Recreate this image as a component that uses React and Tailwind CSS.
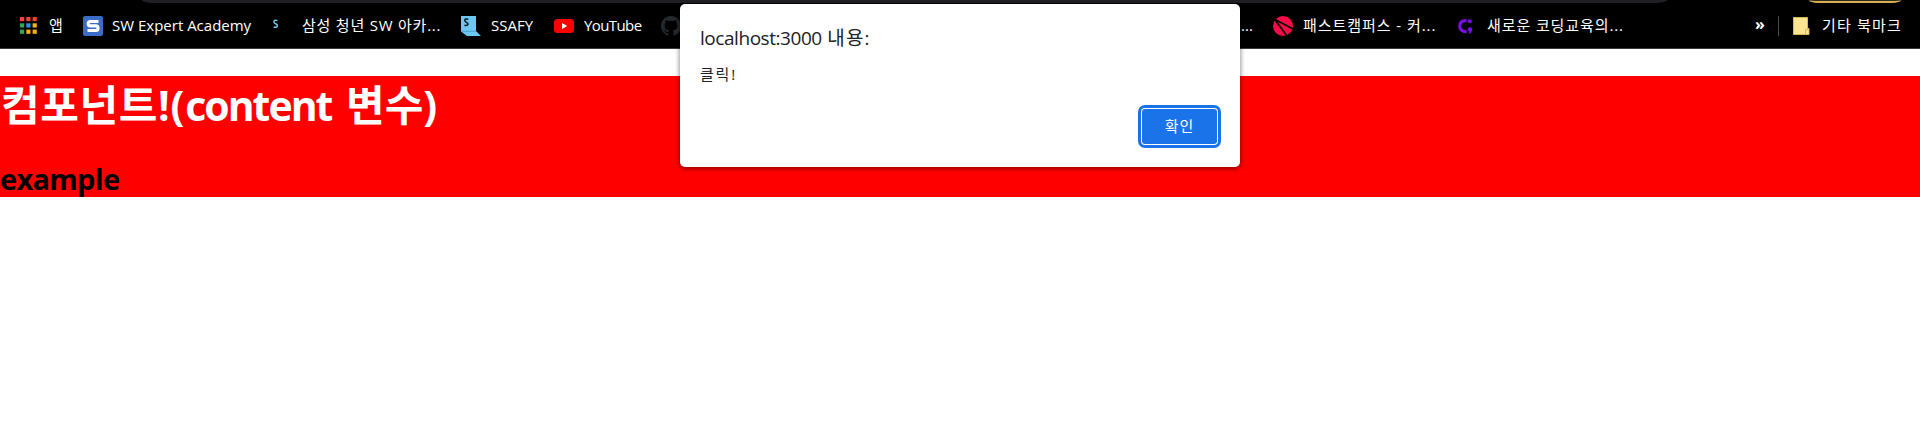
import React from "react";

const latin = "font-['Open_Sans','Noto_Sans_CJK_KR',sans-serif]";

function AppsIcon() {
  const c = ["#f44336", "#f44336", "#f44336", "#34a853", "#2196f3", "#fbb012", "#34a853", "#fbb012", "#fbb012"];
  return (
    <svg className="h-[17px] w-[17px]" viewBox="0 0 17 17">
      {c.map((f, i) => (
        <rect key={i} x={(i % 3) * 6.3} y={Math.floor(i / 3) * 6.3} width="4.2" height="4.2" fill={f} />
      ))}
    </svg>
  );
}

function SwIcon() {
  return (
    <svg className="h-5 w-5" viewBox="0 0 20 20">
      <rect width="20" height="20" rx="2" fill="#3a6cc8" />
      <path d="M15.5 5.5H7.2Q5.2 5.5 5.2 7.7T7.2 9.900H13Q15 9.900 15 12.200T13 14.500H4.500" fill="none" stroke="#fff" strokeWidth="3.1" />
    </svg>
  );
}

function SmallS() {
  return (
    <svg className="h-5 w-5" viewBox="0 0 20 20">
      <path d="M4.500 4.600Q.9 3.600 .9 5.800Q.9 7.100 2.600 7.800Q4.400 8.500 4.400 9.800Q4.200 12 .6 11" fill="none" stroke="#6accf0" strokeWidth="1.5" />
    </svg>
  );
}

function SsafyIcon() {
  return (
    <svg className="h-5 w-5" viewBox="0 0 20 20">
      <path d="M0 0H15V15L20 20H6L0 15.500Z" fill="#6cc8f2" />
      <path d="M.5 15.300H15" stroke="#3f90b8" strokeWidth=".7" />
      <path d="M7.300 3.200Q3.800 2.400 3.800 4.300Q3.800 5.500 5.300 6.200Q7 6.900 6.900 8.100Q6.700 10 3.400 9.200" fill="none" stroke="#0b1c25" strokeWidth="1.600" />
    </svg>
  );
}

function YouTubeIcon() {
  return (
    <svg className="h-5 w-5" viewBox="0 0 20 20">
      <rect y="3" width="20" height="14" rx="3.500" fill="#f00" />
      <path d="M8 7L13.200 10L8 13Z" fill="#fff" />
    </svg>
  );
}

function GithubIcon() {
  return (
    <svg className="h-5 w-5" viewBox="0 0 16 16" fill="#24292e">
      <path d="M8 0C3.580 0 0 3.580 0 8c0 3.540 2.290 6.530 5.470 7.590.4.070.55-.17.55-.38 0-.19-.01-.82-.01-1.490-2.010.37-2.530-.49-2.690-.94-.09-.23-.48-.94-.82-1.130-.28-.15-.68-.52-.01-.53.63-.01 1.080.58 1.230.82.72 1.210 1.870.87 2.330.66.070-.52.28-.87.51-1.070-1.780-.2-3.640-.89-3.640-3.950 0-.87.31-1.590.82-2.150-.08-.2-.36-1.020.08-2.120 0 0 .67-.21 2.200.82.64-.18 1.320-.27 2-.27s1.360.09 2 .27c1.530-1.040 2.200-.82 2.200-.82.44 1.100.16 1.920.08 2.120.51.56.82 1.270.82 2.150 0 3.070-1.870 3.750-3.650 3.950.29.25.54.73.54 1.480 0 1.070-.01 1.930-.01 2.200 0 .21.15.46.55.38A8.010 8.010 0 0 0 16 8c0-4.420-3.580-8-8-8Z" />
    </svg>
  );
}

function FastCampusIcon() {
  return (
    <svg className="h-5 w-5" viewBox="0 0 20 20">
      <circle cx="10" cy="10" r="10" fill="#fa0a46" />
      <path d="M1 3L20 13M2.500 4.500L14 20" fill="none" stroke="#000" strokeWidth="1.800" />
    </svg>
  );
}

function CodingIcon() {
  return (
    <svg className="h-5 w-5" viewBox="0 0 20 20">
      <path d="M9.500 4.500Q2.700 4.600 2.700 10T9.500 15.800" fill="none" stroke="#7f0cf5" strokeWidth="3" />
      <circle cx="12.800" cy="5.200" r="2" fill="#7f0cf5" />
      <path d="M10.800 12.900a2.200 2.200 0 1 1 4.300 1.200Q14.700 17.200 12 17.900L12.600 15.400Q10.800 14.800 10.800 12.900Z" fill="#7f0cf5" />
    </svg>
  );
}

function FolderIcon() {
  return (
    <svg className="h-5 w-5" viewBox="0 0 20 20">
      <path d="M.5 1.500H14.500V12.500H16V18.500H.5Z" fill="#ffe493" stroke="#d9b64e" />
      <path d="M12.500 18V13.500H14.500" fill="none" stroke="#d9b64e" />
    </svg>
  );
}

function Bookmark({ icon, width, children, tracking = "" }) {
  return (
    <div className={`flex h-full shrink-0 items-center ${width}`}>
      <span className="mr-[9px] flex w-5 shrink-0 items-center">{icon}</span>
      <span className={`whitespace-nowrap ${tracking}`}>{children}</span>
    </div>
  );
}

export default function App() {
  return (
    <div className={`relative h-[432px] w-[1920px] overflow-hidden bg-white ${latin}`}>
      <header className="flex h-[49px] flex-col border-b border-[#3c3838] bg-black text-[15px] text-white">
        <div className="flex h-[3px] shrink-0 pl-[142px]">
          <div className="h-[3px] w-[1525px] bg-[#202124] [border-radius:0_0_12px_12px/0_0_3px_3px]" />
          <div className="ml-[142px] h-[3px] w-[92px] border-b-2 border-[#d9b04c] bg-[#2d2a24] [border-radius:0_0_9px_9px/0_0_3px_3px]" />
        </div>
        <nav className="flex h-[45px] items-center pl-5">
          <Bookmark icon={<AppsIcon />} width="w-[63px]">앱</Bookmark>
          <Bookmark icon={<SwIcon />} width="w-[190px]">SW Expert Academy</Bookmark>
          <Bookmark icon={<SmallS />} width="w-[188px]" tracking="tracking-[0.78px]">삼성 청년 SW 아카...</Bookmark>
          <Bookmark icon={<SsafyIcon />} width="w-[93px]" tracking="pl-px">SSAFY</Bookmark>
          <Bookmark icon={<YouTubeIcon />} width="w-[107px]" tracking="pl-px tracking-[-0.6px]">YouTube</Bookmark>
          <Bookmark icon={<GithubIcon />} width="w-[580px]" />
          <span className="w-[32px] shrink-0">...</span>
          <Bookmark icon={<FastCampusIcon />} width="w-[184px]" tracking="pl-px tracking-[0.95px]">패스트캠퍼스 - 커...</Bookmark>
          <Bookmark icon={<CodingIcon />} width="w-[298px]" tracking="pl-px tracking-[0.9px]">새로운 코딩교육의...</Bookmark>
          <span className="w-[23px] shrink-0 pb-[3px] text-[16px] font-bold">»</span>
          <span className="mr-[14px] h-5 w-px shrink-0 bg-[#4a4b4e]" />
          <Bookmark icon={<FolderIcon />} width="w-[120px]" tracking="tracking-[1.2px]">기타 북마크</Bookmark>
        </nav>
      </header>

      <main className="mt-[27px] h-[121px] bg-[red]">
        <h1 className="h-[85px] pl-px text-[42px] leading-[58px] font-bold whitespace-nowrap text-white">
          <span className="tracking-[0.6px]">컴포넌트</span>
          <span className="text-[41px] tracking-[0.8px]">!(</span>
          <span className="text-[41px] tracking-[-2px]">content </span>
          <span className="ml-[6px]">변수</span>
          <span className="text-[41px]">)</span>
        </h1>
        <h2 className="text-[29px] leading-[35px] font-bold tracking-[-0.7px] text-black">example</h2>
      </main>

      <div role="dialog" className="absolute top-1 left-[680px] flex h-[163px] w-[560px] flex-col rounded-[5px] bg-white px-5 pt-5 text-[#202124] shadow-[0_1px_4px_1px_rgba(0,0,0,0.4)]">
        <p className="h-[38px] text-[19px] leading-7">
          <span className="tracking-[-0.45px]">localhost:3000 </span>
          <span className="ml-px tracking-[1.2px]">내용:</span>
        </p>
        <p className="h-[47px] text-[15px] leading-[24px] tracking-[1.8px]">클릭!</p>
        <button className="mr-[3px] flex h-[35px] w-[75px] items-center justify-center self-end rounded-[3px] bg-[#1a73e8] pb-px text-[15px] tracking-[1px] text-white shadow-[0_0_0_1px_#fff,0_0_0_4px_#1a73e8]">확인</button>
      </div>
    </div>
  );
}
